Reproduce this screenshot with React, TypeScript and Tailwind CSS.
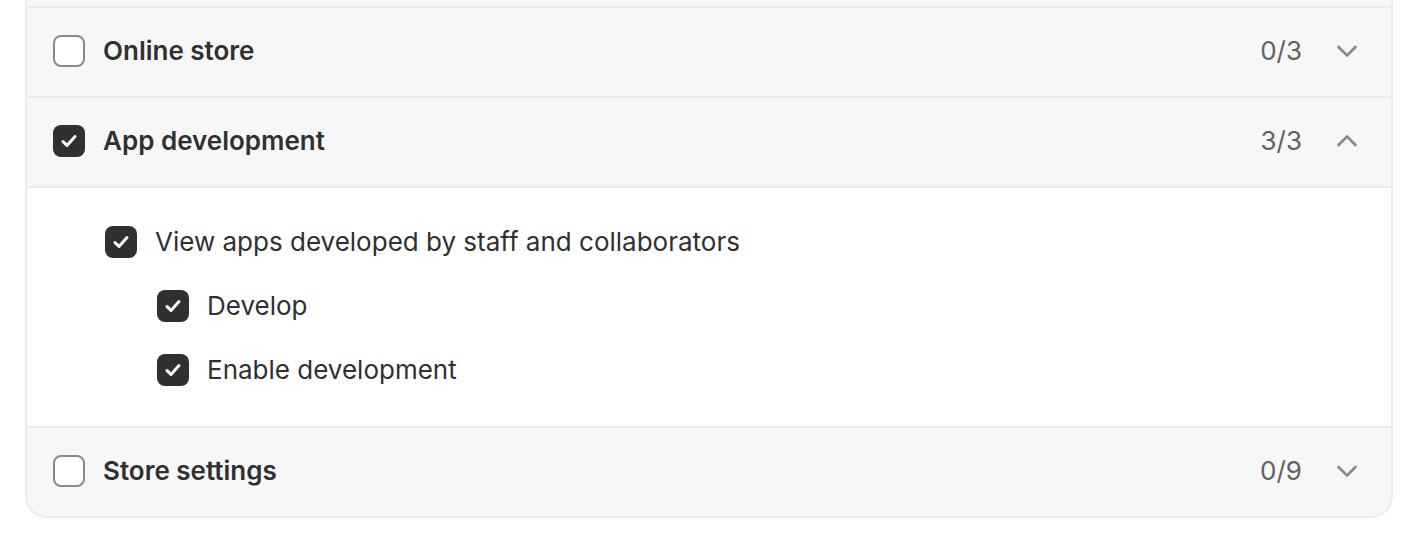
import type { ReactNode } from 'react';

type Section = {
  label: string;
  count: string;
  checked: boolean;
  open: boolean;
};

const sections: Section[] = [
  { label: 'Online store', count: '0/3', checked: false, open: false },
  { label: 'App development', count: '3/3', checked: true, open: true },
  { label: 'Store settings', count: '0/9', checked: false, open: false },
];

function Checkbox({ checked }: { checked: boolean }) {
  if (!checked) {
    return <span className="block w-8 h-8 shrink-0 rounded-[8px] border-2 border-[#8a8a8a] bg-white" />;
  }
  return (
    <span className="flex w-8 h-8 shrink-0 rounded-[8px] bg-[#303030] items-center justify-center">
      <svg width="32" height="32" viewBox="0 0 32 32" fill="none">
        <path
          d="M10 16.6 L14 20.4 L22 11.6"
          stroke="#fff"
          strokeWidth="3"
          strokeLinecap="round"
          strokeLinejoin="round"
        />
      </svg>
    </span>
  );
}

function Chevron({ up }: { up: boolean }) {
  return (
    <svg width="22" height="22" viewBox="0 0 22 22" fill="none">
      <path
        d={up ? 'M2.5 15 L11 6.5 L19.5 15' : 'M2.5 7 L11 15.5 L19.5 7'}
        stroke="#8a8a8a"
        strokeWidth="2.6"
        strokeLinecap="round"
        strokeLinejoin="round"
      />
    </svg>
  );
}

function Item({ children }: { children: ReactNode }) {
  return (
    <div className="flex items-center gap-[18px] h-8">
      <Checkbox checked />
      <span className="text-[26px] text-[#303030] leading-none">{children}</span>
    </div>
  );
}

export default function App() {
  return (
    <div className="w-[1418px] h-[544px] bg-white overflow-hidden font-['Inter',sans-serif]">
      <div className="ml-[25px] w-[1368px] border-x-2 border-b-2 border-[#ebebeb] rounded-b-[22px] overflow-hidden bg-[#f7f7f7]">
        <div className="h-[6px]" />
        {sections.map((s) => (
          <div key={s.label}>
            <div className="h-[90px] border-t-2 border-[#ebebeb] flex items-center pl-[26px] pr-[33px] pb-[2px]">
              <Checkbox checked={s.checked} />
              <span className="ml-[18px] text-[26px] font-semibold text-[#303030] leading-none">{s.label}</span>
              <span className="ml-auto text-[26px] text-[#616161] leading-none">{s.count}</span>
              <span className="ml-[34px] flex">
                <Chevron up={s.open} />
              </span>
            </div>
            {s.open && (
              <div className="bg-white border-t-2 border-[#ebebeb] pl-[78px] pt-[38px] pb-[40px] flex flex-col gap-8">
                <Item>View apps developed by staff and collaborators</Item>
                <div className="pl-[52px] flex flex-col gap-8">
                  <Item>Develop</Item>
                  <Item>Enable development</Item>
                </div>
              </div>
            )}
          </div>
        ))}
      </div>
    </div>
  );
}
